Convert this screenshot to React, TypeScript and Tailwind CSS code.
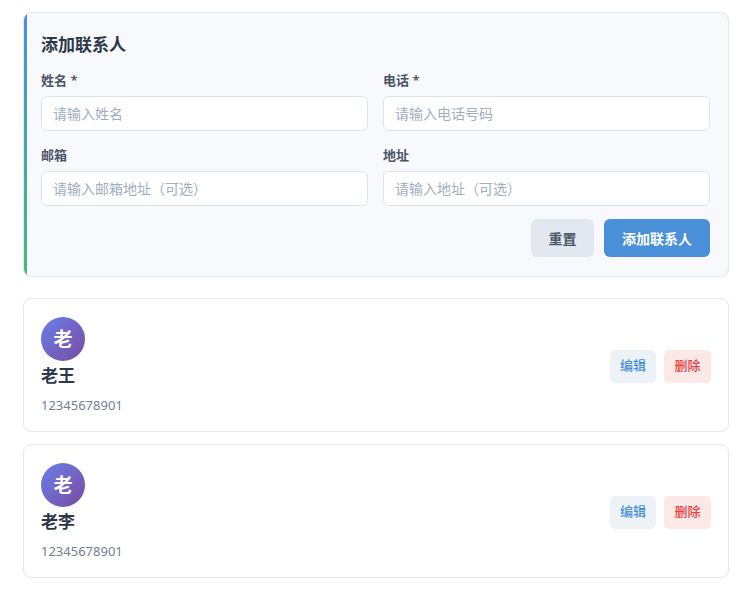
import { useState } from "react";

interface Contact {
  id: number;
  name: string;
  phone: string;
  email?: string;
  address?: string;
}

const initialContacts: Contact[] = [
  { id: 1, name: "老王", phone: "12345678901" },
  { id: 2, name: "老李", phone: "12345678901" },
];

const inputClass =
  "w-full h-[35px] px-[11px] rounded-[6px] border border-[#dbe4ee] bg-white text-[14px] text-[#2d3748] placeholder:text-[#a0aec0] outline-none focus:border-[#4a90d9]";

function Field({
  label,
  required,
  placeholder,
  value,
  onChange,
}: {
  label: string;
  required?: boolean;
  placeholder: string;
  value: string;
  onChange: (v: string) => void;
}) {
  return (
    <div>
      <label className="block text-[13px] leading-[20px] font-semibold text-[#4a5568] mb-[6px]">
        {label}
        {required && " *"}
      </label>
      <input
        className={inputClass}
        placeholder={placeholder}
        value={value}
        onChange={(e) => onChange(e.target.value)}
      />
    </div>
  );
}

export default function App() {
  const [contacts, setContacts] = useState<Contact[]>(initialContacts);
  const [name, setName] = useState("");
  const [phone, setPhone] = useState("");
  const [email, setEmail] = useState("");
  const [address, setAddress] = useState("");

  const resetForm = () => {
    setName("");
    setPhone("");
    setEmail("");
    setAddress("");
  };

  const handleAdd = () => {
    if (!name.trim() || !phone.trim()) return;
    setContacts([...contacts, { id: Date.now(), name, phone, email, address }]);
    resetForm();
  };

  const handleDelete = (id: number) => {
    setContacts(contacts.filter((c) => c.id !== id));
  };

  return (
    <div
      className="min-h-screen bg-white px-[23px] pt-[12px] pb-[16px]"
      style={{ fontFamily: '"Noto Sans", "Noto Sans CJK SC", sans-serif' }}
    >
      {/* Add contact form */}
      <div className="flex rounded-[8px] border border-[#e2e8f0] bg-[#f7f9fc] overflow-hidden">
        <div className="w-[3px] shrink-0 bg-gradient-to-b from-[#4a90d9] to-[#48bb78]" />
        <div className="flex-1 pl-[14px] pr-[18px] pt-[18px] pb-[19px]">
          <h2 className="text-[17px] leading-[28px] font-bold text-[#2d3748] mb-[11px]">添加联系人</h2>
          <div className="grid grid-cols-2 gap-x-[15px] gap-y-[14px]">
            <Field label="姓名" required placeholder="请输入姓名" value={name} onChange={setName} />
            <Field label="电话" required placeholder="请输入电话号码" value={phone} onChange={setPhone} />
            <Field label="邮箱" placeholder="请输入邮箱地址（可选）" value={email} onChange={setEmail} />
            <Field label="地址" placeholder="请输入地址（可选）" value={address} onChange={setAddress} />
          </div>
          <div className="flex justify-end gap-[10px] mt-[13px]">
            <button
              onClick={resetForm}
              className="h-[38px] w-[63px] rounded-[6px] bg-[#e2e8f0] text-[14px] font-semibold text-[#4a5568]"
            >
              重置
            </button>
            <button
              onClick={handleAdd}
              className="h-[38px] w-[106px] rounded-[6px] bg-[#4a90d9] text-[14px] font-semibold text-white"
            >
              添加联系人
            </button>
          </div>
        </div>
      </div>

      {/* Contact list */}
      <div className="mt-[21px] flex flex-col gap-[12px]">
        {contacts.map((c) => (
          <div
            key={c.id}
            className="flex items-center justify-between rounded-[8px] border border-[#e2e8f0] bg-white pl-[17px] pr-[17px] pt-[18px] pb-[16px]"
          >
            <div>
              <div className="w-[44px] h-[44px] rounded-full bg-gradient-to-br from-[#667eea] to-[#764ba2] flex items-center justify-center text-white text-[19px] font-bold">
                {c.name.charAt(0)}
              </div>
              <div className="mt-[4px] text-[17px] leading-[22px] font-bold text-[#2d3748]">{c.name}</div>
              <div className="mt-[8px] text-[13px] leading-[20px] text-[#718096]">{c.phone}</div>
            </div>
            <div className="flex gap-[8px]">
              <button className="h-[33px] w-[46px] rounded-[5px] bg-[#edf2f7] text-[13px] font-medium text-[#4a90d9]">
                编辑
              </button>
              <button
                onClick={() => handleDelete(c.id)}
                className="h-[33px] w-[47px] rounded-[5px] bg-[#fde8e8] text-[13px] font-medium text-[#e53e3e]"
              >
                删除
              </button>
            </div>
          </div>
        ))}
      </div>
    </div>
  );
}
